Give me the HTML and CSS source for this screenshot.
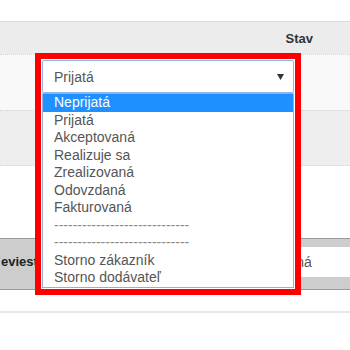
FILE: index.html
```html
<!DOCTYPE html>
<html lang="sk">
<head>
<meta charset="utf-8">
<title>Stav</title>
<link rel="stylesheet" href="styles.css">
</head>
<body>
<div class="page">
  <div class="topgap"></div>
  <div class="table">
    <div class="thead"><span class="th-stav">Stav</span></div>
    <div class="row row1"></div>
    <div class="row row2"></div>
  </div>
  <div class="gap"></div>
  <div class="bar">
    <span class="bar-label">eviest</span>
    <div class="bar-input">Vybavená</div>
  </div>
  <div class="gap2"></div>
  <div class="rule"></div>

  <div class="dropdown">
    <div class="select">
      <span class="select-value">Prijatá</span>
      <svg class="arrow" width="7" height="6" viewBox="0 0 7 6"><polygon points="0,0 7,0 3.5,6" fill="#333"/></svg>
    </div>
    <ul class="list">
      <li class="opt selected">Neprijatá</li>
      <li class="opt">Prijatá</li>
      <li class="opt">Akceptovaná</li>
      <li class="opt">Realizuje sa</li>
      <li class="opt">Zrealizovaná</li>
      <li class="opt">Odovzdaná</li>
      <li class="opt">Fakturovaná</li>
      <li class="opt sep">-----------------------------</li>
      <li class="opt sep">-----------------------------</li>
      <li class="opt">Storno zákazník</li>
      <li class="opt">Storno dodávateľ</li>
    </ul>
  </div>
</div>
</body>
</html>
```
FILE: styles.css
```css
html, body {
  margin: 0;
  padding: 0;
  background: #fff;
}
body {
  font-family: "Liberation Sans", Arial, sans-serif;
  font-size: 14px;
  color: #555;
}
.page {
  position: relative;
  width: 350px;
  height: 350px;
  overflow: hidden;
}
.topgap {
  height: 21px;
}
.table {
  border-top: 1px solid #dcdcdc;
}
.thead {
  height: 32px;
  background: #ececec;
  display: flex;
  align-items: center;
  justify-content: flex-end;
  padding-right: 37px;
}
.th-stav {
  font-weight: bold;
  font-size: 13px;
  color: #333;
}
.row {
  border-top: 1px dotted #d6d6d6;
}
.row1 {
  height: 55px;
  background: #f9f9f9;
}
.row2 {
  height: 54px;
  background: #eeeeee;
  border-bottom: 1px dotted #d6d6d6;
}
.gap {
  height: 72px;
}
.bar {
  height: 50px;
  background: #cdcdcd;
  border-top: 1px solid #9a9a9a;
  border-bottom: 1px solid #9a9a9a;
  display: flex;
  justify-content: space-between;
  align-items: flex-start;
}
.bar-label {
  font-weight: bold;
  font-size: 13px;
  color: #222;
  margin-left: 1px;
  margin-top: 15px;
}
.bar-input {
  margin-top: 8px;
  height: 30px;
  width: 110px;
  box-sizing: border-box;
  background: #fff;
  padding-left: 10px;
  line-height: 30px;
  color: #555;
}
.gap2 {
  height: 21px;
}
.rule {
  height: 2px;
  background: #e8e8e8;
}
.dropdown {
  position: absolute;
  left: 35px;
  top: 53px;
  width: 252px;
  border: 6px solid #ff0000;
  padding: 1px;
  background: #fff;
}
.select {
  height: 33px;
  box-sizing: border-box;
  border: 1px solid #8db6f0;
  border-radius: 2px;
  display: flex;
  align-items: center;
  justify-content: space-between;
  padding: 0 9px 0 11px;
  color: #555;
}
.arrow {
  display: block;
}
.list {
  margin: 0;
  padding: 0 0 1px;
  list-style: none;
  height: 195px;
  box-sizing: border-box;
  border: 1px solid #8fb2e0;
}
.opt {
  height: 17.5px;
  line-height: 17.5px;
  padding-left: 11px;
  color: #555;
  white-space: nowrap;
}
.opt.selected {
  background: #1e90ff;
  color: #fff;
}
.opt.sep {
  color: #8a8a8a;
}
```
